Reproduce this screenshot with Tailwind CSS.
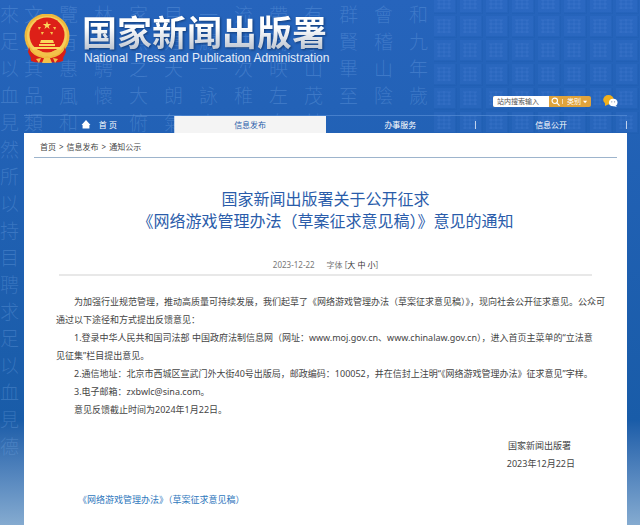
<!DOCTYPE html>
<html lang="zh-CN">

<head>
    <meta charset="UTF-8">
    <meta name="viewport" content="width=device-width, initial-scale=1.0">
    <title>国家新闻出版署</title>
    <script src="https://cdn.jsdelivr.net/npm/@tailwindcss/browser@4"></script>
</head>

<body class="font-['Noto_Sans','Noto_Sans_CJK_SC',sans-serif] text-[8px] text-[#444]">
    <div class="relative flex min-h-screen flex-col overflow-hidden bg-linear-to-b from-[#2664bc] from-0% via-[#195ca8] via-80% to-[#85abd0] to-100%">
        <!-- Calligraphy background -->
        <div aria-hidden="true" class="pointer-events-none absolute inset-0 flex items-start select-none font-['Noto_Sans_CJK_TC',sans-serif] text-[19px] leading-[27px] font-light text-[#8cbcf5]/25 [&_p]:w-[19px] [&_p]:shrink-0">
            <div class="w-6"><p>來足以血見然所以持目聘求足以血見德</p></div>
            <div class="w-[35px]"><p>文盛其品類</p></div>
            <div class="w-[35px]"><p>覽有惠風和</p></div>
            <div class="w-[35px]"><p>林其騁懷</p></div>
            <div class="w-[35px]"><p>家無之大俯</p></div>
            <div class="w-[35px]"><p>目是天朗氣</p></div>
            <div class="w-[35px]"><p>一觴一詠上</p></div>
            <div class="w-[35px]"><p>流曲次稚</p></div>
            <div class="w-[35px]"><p>帶湍映左右</p></div>
            <div class="w-[35px]"><p>有崇山茂林</p></div>
            <div class="w-[35px]"><p>群賢畢至</p></div>
            <div class="w-[35px]"><p>會稽山陰</p></div>
            <div class="w-[35px]"><p>和九年歲</p></div>
        </div>
        <!-- Type blocks on the right -->
        <svg aria-hidden="true" class="pointer-events-none absolute top-0 right-0 h-[134px] w-[208px]">
            <defs>
                <pattern id="blocks" width="26" height="24" patternUnits="userSpaceOnUse" y="-8">
                    <rect x="2" y="0" width="21" height="20" fill="#4a86dc" fill-opacity=".13" />
                    <path d="M5 4h14M5 8h14M5 12h14M5 16h14M7 4v13M12 3v14M17 4v13" stroke="#6aa0ec" stroke-opacity=".14" fill="none" />
                    <path d="M2 21.500h22M24.500 0v22" stroke="#164f9e" stroke-opacity=".15" fill="none" />
                </pattern>
            </defs>
            <rect width="208" height="134" fill="url(#blocks)" />
        </svg>

        <header class="relative flex h-[115px] flex-col justify-between pt-3 pr-[22px] pb-2 pl-6">
            <a href="#" class="flex items-start gap-3">
                <svg viewBox="0 0 46 50" class="mt-[2px] h-[50px] w-[46px]" role="img" aria-label="国徽">
                    <path d="M6 37h34l-1 10q-8 3-16 0q-8 3-16 0z" fill="#d81e18" />
                    <circle cx="23" cy="22" r="22.500" fill="#efb83c" />
                    <circle cx="23" cy="22" r="20" fill="#f6ce5a" />
                    <circle cx="23" cy="21" r="17.500" fill="#dd2018" />
                    <path d="M23 7l1 3h3.200l-2.600 2 1 3-2.600-1.900-2.600 1.900 1-3-2.600-2H22z" fill="#fbd75c" />
                    <path d="M14 13h3l-2 3zM29 13h3l-1 3zM17 18h3l-2 3zM26 18h3l-1 3z" fill="#f8c850" />
                    <path d="M17 26h12l1 3H16zM15 30h16v2H15zM9 33h28v2H9z" fill="#fbd75c" />
                    <path d="M5 33q2 8 10 11h16q8-3 10-11l1 5q-1 4-5 7H9q-4-3-5-7z" fill="#d81e18" />
                    <path d="M9 36q6-1 11 3h6q5-4 11-3-2 6-8 5-3 3-6 1-3 2-6-1-6 1-8-5z" fill="#f3c14a" />
                    <path d="M12 45l5-1-2 5zM34 45l-5-1 2 5zM20 44h6l2 5h-10z" fill="#f3c14a" />
                </svg>
                <span class="flex flex-col">
                    <span class="bg-linear-to-b from-white from-40% to-[#bcc4d0] bg-clip-text font-['Noto_Sans_CJK_SC',sans-serif] text-[35px] leading-[38px] font-bold text-transparent drop-shadow-[1px_1px_1px_#123c78]">国家新闻出版署</span>
                    <span class="pl-[2px] font-['Liberation_Sans',sans-serif] text-[12px] leading-4 whitespace-pre text-[#e4edf9]">National  Press and Publication Administration</span>
                </span>
            </a>
            <div class="flex items-center justify-end gap-3">
                <form class="flex h-[11px] w-[98px] overflow-hidden rounded-xs bg-[#e0a33c] text-[7px] leading-[11px]">
                    <input type="text" aria-label="站内搜索" placeholder="站内搜索输入" class="w-[56px] bg-white px-1 outline-none placeholder:text-[#555]">
                    <button type="button" aria-label="搜索" class="flex w-[13px] items-center justify-center">
                        <svg viewBox="0 0 10 10" class="h-[9px] w-[9px]" fill="none" stroke="white" stroke-width="1.300">
                            <circle cx="4.200" cy="4.200" r="3" />
                            <path d="M6.500 6.500L9.500 9.500" />
                        </svg>
                    </button>
                    <span class="my-[3px] w-px bg-white/60"></span>
                    <select aria-label="类别" class="w-[20px] appearance-none bg-transparent pl-1 text-white outline-none">
                        <option>类别</option>
                    </select>
                    <svg viewBox="0 0 6 10" class="h-[11px] w-[5px]"><path d="M0 4h5L2.500 7z" fill="white" /></svg>
                </form>
                <a href="#" aria-label="微信">
                    <svg viewBox="0 0 15 12" class="h-3 w-[15px]">
                        <path d="M2 7v4l4-2z" fill="#f2b01c" />
                        <ellipse cx="5.500" cy="4.700" rx="5.300" ry="4.600" fill="#f2b01c" />
                        <ellipse cx="10.200" cy="7.500" rx="4.300" ry="3.800" fill="#fff" />
                        <path d="M12 10l2 2-4-1z" fill="#fff" />
                        <circle cx="8.800" cy="6.800" r=".6" fill="#7a8aa8" />
                        <circle cx="11.600" cy="6.800" r=".6" fill="#7a8aa8" />
                    </svg>
                </a>
            </div>
        </header>

        <!-- Navigation -->
        <nav class="relative mr-[13px] ml-6 grid h-[18px] grid-cols-4 border-t border-[#5e93d8]/60 text-white">
            <a href="#" class="flex items-center justify-center gap-2 border-r border-white/70">
                <svg viewBox="0 0 10 10" class="h-[9px] w-[10px]"><path d="M5 0l5 5.500H8.800V9.500H1.200V5.500H0z" fill="white" /></svg>
                <span>首 页</span>
            </a>
            <a href="#" class="flex items-center justify-center bg-[#f4f4f4] text-[#2a5caa]">信息发布</a>
            <a href="#" class="flex items-center justify-center"><span class="flex-1 text-center">办事服务</span><span class="h-2 w-px bg-white/70"></span></a>
            <a href="#" class="flex items-center justify-center"><span class="flex-1 text-center">信息公开</span><span class="h-2 w-px bg-white/70"></span></a>
        </nav>

        <!-- Article -->
        <main class="relative mr-[13px] ml-6 flex-1 bg-white pb-4">
            <div class="mx-[10px] flex gap-[3px] border-b border-[#9db4cc] pt-2 pb-1 pl-[6px] leading-3">
                <a href="#">首页</a><span>&gt;</span><a href="#">信息发布</a><span>&gt;</span><a href="#">通知公示</a>
            </div>
            <h1 class="mt-[30px] text-center text-[16px] leading-[22px] text-[#2a5caa]">国家新闻出版署关于公开征求<br>《网络游戏管理办法（草案征求意见稿）》意见的通知</h1>
            <div class="mx-[35px] mt-[27px] flex justify-center gap-3 border-b-2 border-[#e8e8e8] pb-[3px] leading-3 text-[#777]">
                <time>2023-12-22</time>
                <span>字体 [<button type="button" class="text-[#333]">大</button> <button type="button" class="text-[#333]">中</button> <button type="button" class="text-[#333]">小</button>]</span>
            </div>
            <div class="mt-[17px] pl-[32px] text-[9px] leading-[18px] whitespace-nowrap text-[#444] [&_p]:indent-[18px]">
                <p>为加强行业规范管理，推动高质量可持续发展，我们起草了《网络游戏管理办法（草案征求意见稿）》，现向社会公开征求意见。公众可<br>通过以下途径和方式提出反馈意见：</p>
                <p>1.登录中华人民共和国司法部 中国政府法制信息网（网址：www.moj.gov.cn、www.chinalaw.gov.cn），进入首页主菜单的“立法意<br>见征集”栏目提出意见。</p>
                <p>2.通信地址：北京市西城区宣武门外大街40号出版局，邮政编码：100052，并在信封上注明“《网络游戏管理办法》征求意见”字样。</p>
                <p>3.电子邮箱：zxbwlc@sina.com。</p>
                <p>意见反馈截止时间为2024年1月22日。</p>
            </div>
            <div class="mt-[18px] mr-[52px] flex flex-col items-end text-[9px] leading-[18px]">
                <p class="mr-1">国家新闻出版署</p>
                <p>2023年12月22日</p>
            </div>
            <a href="#" class="mt-[18px] ml-[54px] inline-block text-[9px] leading-[18px] text-[#2f78bd]">《网络游戏管理办法》（草案征求意见稿）</a>
        </main>
    </div>
</body>

</html>
